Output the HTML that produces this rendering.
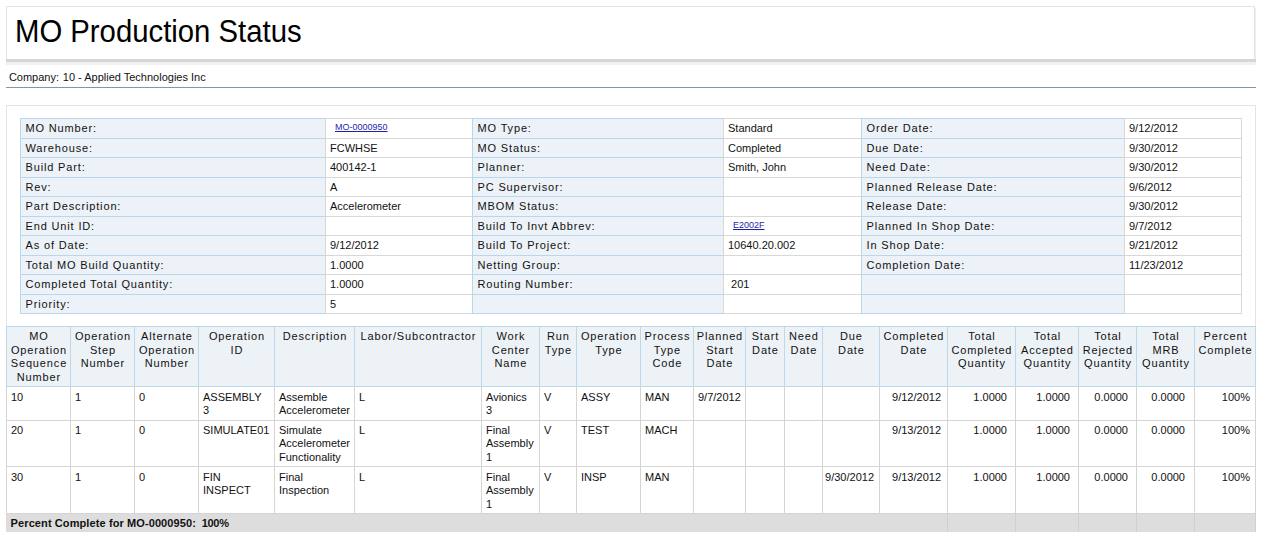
<!DOCTYPE html>
<html><head><meta charset="utf-8"><style>
html,body{margin:0;padding:0;background:#fff;}
body{position:relative;width:1266px;height:559px;overflow:hidden;font-family:"Liberation Sans",sans-serif;color:#000;}
.t{position:absolute;white-space:nowrap;line-height:13px;color:#111;}
.title{position:absolute;white-space:nowrap;font-size:31px;line-height:31px;color:#000;transform:scaleX(0.945);transform-origin:0 0;}
.h{position:absolute;text-align:center;font-size:11px;line-height:13.6px;color:#111;letter-spacing:0.85px;padding-left:0.85px;box-sizing:border-box;}
.l{letter-spacing:0.85px;}
.d{position:absolute;white-space:nowrap;font-size:11px;line-height:13.4px;color:#111;}
a{color:#1f1faa;text-decoration:underline;font-size:9px;}
</style></head><body>
<div style="position:absolute;left:6px;top:6px;width:1247px;height:53px;background:#fff;border:1px solid #e2e2e2;border-bottom:none;"></div>
<div style="position:absolute;left:1255px;top:8px;width:1px;height:51px;background:#eeeeee;"></div>
<div style="position:absolute;left:6px;top:59px;width:1250px;height:3px;background:#d6d6d6;"></div>
<div style="position:absolute;left:6px;top:62px;width:1250px;height:3px;background:#f1f1f1;"></div>
<div class="title" style="left:14.8px;top:16px;">MO Production Status</div>
<div class="t" style="left:8.9px;top:71px;font-size:11px;">Company:</div>
<div class="t" style="left:62.8px;top:71px;font-size:11px;">10 - Applied Technologies Inc</div>
<div style="position:absolute;left:6px;top:87px;width:1250px;height:1px;background:#7f98ab;"></div>
<div style="position:absolute;left:6px;top:105px;width:1248px;height:221px;border:1px solid #e4e4e4;border-bottom:none;background:#fff;"></div>
<div style="position:absolute;left:20px;top:118px;width:305px;height:195px;background:#ecf2f7;"></div>
<div style="position:absolute;left:472px;top:118px;width:251px;height:195px;background:#ecf2f7;"></div>
<div style="position:absolute;left:861px;top:118px;width:263px;height:195px;background:#ecf2f7;"></div>
<div style="position:absolute;left:20px;top:118px;width:306px;height:1px;background:#b8d7ea;"></div>
<div style="position:absolute;left:325px;top:118px;width:148px;height:1px;background:#d8d8d8;"></div>
<div style="position:absolute;left:472px;top:118px;width:252px;height:1px;background:#b8d7ea;"></div>
<div style="position:absolute;left:723px;top:118px;width:139px;height:1px;background:#d8d8d8;"></div>
<div style="position:absolute;left:861px;top:118px;width:264px;height:1px;background:#b8d7ea;"></div>
<div style="position:absolute;left:1124px;top:118px;width:118px;height:1px;background:#d8d8d8;"></div>
<div style="position:absolute;left:20px;top:138px;width:306px;height:1px;background:#b8d7ea;"></div>
<div style="position:absolute;left:325px;top:138px;width:148px;height:1px;background:#d8d8d8;"></div>
<div style="position:absolute;left:472px;top:138px;width:252px;height:1px;background:#b8d7ea;"></div>
<div style="position:absolute;left:723px;top:138px;width:139px;height:1px;background:#d8d8d8;"></div>
<div style="position:absolute;left:861px;top:138px;width:264px;height:1px;background:#b8d7ea;"></div>
<div style="position:absolute;left:1124px;top:138px;width:118px;height:1px;background:#d8d8d8;"></div>
<div style="position:absolute;left:20px;top:157px;width:306px;height:1px;background:#b8d7ea;"></div>
<div style="position:absolute;left:325px;top:157px;width:148px;height:1px;background:#d8d8d8;"></div>
<div style="position:absolute;left:472px;top:157px;width:252px;height:1px;background:#b8d7ea;"></div>
<div style="position:absolute;left:723px;top:157px;width:139px;height:1px;background:#d8d8d8;"></div>
<div style="position:absolute;left:861px;top:157px;width:264px;height:1px;background:#b8d7ea;"></div>
<div style="position:absolute;left:1124px;top:157px;width:118px;height:1px;background:#d8d8d8;"></div>
<div style="position:absolute;left:20px;top:177px;width:306px;height:1px;background:#b8d7ea;"></div>
<div style="position:absolute;left:325px;top:177px;width:148px;height:1px;background:#d8d8d8;"></div>
<div style="position:absolute;left:472px;top:177px;width:252px;height:1px;background:#b8d7ea;"></div>
<div style="position:absolute;left:723px;top:177px;width:139px;height:1px;background:#d8d8d8;"></div>
<div style="position:absolute;left:861px;top:177px;width:264px;height:1px;background:#b8d7ea;"></div>
<div style="position:absolute;left:1124px;top:177px;width:118px;height:1px;background:#d8d8d8;"></div>
<div style="position:absolute;left:20px;top:196px;width:306px;height:1px;background:#b8d7ea;"></div>
<div style="position:absolute;left:325px;top:196px;width:148px;height:1px;background:#d8d8d8;"></div>
<div style="position:absolute;left:472px;top:196px;width:252px;height:1px;background:#b8d7ea;"></div>
<div style="position:absolute;left:723px;top:196px;width:139px;height:1px;background:#d8d8d8;"></div>
<div style="position:absolute;left:861px;top:196px;width:264px;height:1px;background:#b8d7ea;"></div>
<div style="position:absolute;left:1124px;top:196px;width:118px;height:1px;background:#d8d8d8;"></div>
<div style="position:absolute;left:20px;top:216px;width:306px;height:1px;background:#b8d7ea;"></div>
<div style="position:absolute;left:325px;top:216px;width:148px;height:1px;background:#d8d8d8;"></div>
<div style="position:absolute;left:472px;top:216px;width:252px;height:1px;background:#b8d7ea;"></div>
<div style="position:absolute;left:723px;top:216px;width:139px;height:1px;background:#d8d8d8;"></div>
<div style="position:absolute;left:861px;top:216px;width:264px;height:1px;background:#b8d7ea;"></div>
<div style="position:absolute;left:1124px;top:216px;width:118px;height:1px;background:#d8d8d8;"></div>
<div style="position:absolute;left:20px;top:235px;width:306px;height:1px;background:#b8d7ea;"></div>
<div style="position:absolute;left:325px;top:235px;width:148px;height:1px;background:#d8d8d8;"></div>
<div style="position:absolute;left:472px;top:235px;width:252px;height:1px;background:#b8d7ea;"></div>
<div style="position:absolute;left:723px;top:235px;width:139px;height:1px;background:#d8d8d8;"></div>
<div style="position:absolute;left:861px;top:235px;width:264px;height:1px;background:#b8d7ea;"></div>
<div style="position:absolute;left:1124px;top:235px;width:118px;height:1px;background:#d8d8d8;"></div>
<div style="position:absolute;left:20px;top:255px;width:306px;height:1px;background:#b8d7ea;"></div>
<div style="position:absolute;left:325px;top:255px;width:148px;height:1px;background:#d8d8d8;"></div>
<div style="position:absolute;left:472px;top:255px;width:252px;height:1px;background:#b8d7ea;"></div>
<div style="position:absolute;left:723px;top:255px;width:139px;height:1px;background:#d8d8d8;"></div>
<div style="position:absolute;left:861px;top:255px;width:264px;height:1px;background:#b8d7ea;"></div>
<div style="position:absolute;left:1124px;top:255px;width:118px;height:1px;background:#d8d8d8;"></div>
<div style="position:absolute;left:20px;top:274px;width:306px;height:1px;background:#b8d7ea;"></div>
<div style="position:absolute;left:325px;top:274px;width:148px;height:1px;background:#d8d8d8;"></div>
<div style="position:absolute;left:472px;top:274px;width:252px;height:1px;background:#b8d7ea;"></div>
<div style="position:absolute;left:723px;top:274px;width:139px;height:1px;background:#d8d8d8;"></div>
<div style="position:absolute;left:861px;top:274px;width:264px;height:1px;background:#b8d7ea;"></div>
<div style="position:absolute;left:1124px;top:274px;width:118px;height:1px;background:#d8d8d8;"></div>
<div style="position:absolute;left:20px;top:294px;width:306px;height:1px;background:#b8d7ea;"></div>
<div style="position:absolute;left:325px;top:294px;width:148px;height:1px;background:#d8d8d8;"></div>
<div style="position:absolute;left:472px;top:294px;width:252px;height:1px;background:#b8d7ea;"></div>
<div style="position:absolute;left:723px;top:294px;width:139px;height:1px;background:#d8d8d8;"></div>
<div style="position:absolute;left:861px;top:294px;width:264px;height:1px;background:#b8d7ea;"></div>
<div style="position:absolute;left:1124px;top:294px;width:118px;height:1px;background:#d8d8d8;"></div>
<div style="position:absolute;left:20px;top:313px;width:306px;height:1px;background:#b8d7ea;"></div>
<div style="position:absolute;left:325px;top:313px;width:148px;height:1px;background:#d8d8d8;"></div>
<div style="position:absolute;left:472px;top:313px;width:252px;height:1px;background:#b8d7ea;"></div>
<div style="position:absolute;left:723px;top:313px;width:139px;height:1px;background:#d8d8d8;"></div>
<div style="position:absolute;left:861px;top:313px;width:264px;height:1px;background:#b8d7ea;"></div>
<div style="position:absolute;left:1124px;top:313px;width:118px;height:1px;background:#d8d8d8;"></div>
<div style="position:absolute;left:20px;top:118px;width:1px;height:196px;background:#b8d7ea;"></div>
<div style="position:absolute;left:325px;top:118px;width:1px;height:196px;background:#d8d8d8;"></div>
<div style="position:absolute;left:472px;top:118px;width:1px;height:196px;background:#b8d7ea;"></div>
<div style="position:absolute;left:723px;top:118px;width:1px;height:196px;background:#d8d8d8;"></div>
<div style="position:absolute;left:861px;top:118px;width:1px;height:196px;background:#b8d7ea;"></div>
<div style="position:absolute;left:1124px;top:118px;width:1px;height:196px;background:#d8d8d8;"></div>
<div style="position:absolute;left:1241px;top:118px;width:1px;height:196px;background:#d8d8d8;"></div>
<div class="t" style="left:25.5px;top:122px;font-size:11px;letter-spacing:0.85px;">MO Number:</div>
<div class="t" style="left:335px;top:118px;"><a>MO-0000950</a></div>
<div class="t" style="left:477.5px;top:122px;font-size:11px;letter-spacing:0.85px;">MO Type:</div>
<div class="t" style="left:728px;top:122px;font-size:11px;">Standard</div>
<div class="t" style="left:866.5px;top:122px;font-size:11px;letter-spacing:0.85px;">Order Date:</div>
<div class="t" style="left:1129px;top:122px;font-size:11px;">9/12/2012</div>
<div class="t" style="left:25.5px;top:142px;font-size:11px;letter-spacing:0.85px;">Warehouse:</div>
<div class="t" style="left:330px;top:142px;font-size:11px;">FCWHSE</div>
<div class="t" style="left:477.5px;top:142px;font-size:11px;letter-spacing:0.85px;">MO Status:</div>
<div class="t" style="left:728px;top:142px;font-size:11px;">Completed</div>
<div class="t" style="left:866.5px;top:142px;font-size:11px;letter-spacing:0.85px;">Due Date:</div>
<div class="t" style="left:1129px;top:142px;font-size:11px;">9/30/2012</div>
<div class="t" style="left:25.5px;top:161px;font-size:11px;letter-spacing:0.85px;">Build Part:</div>
<div class="t" style="left:330px;top:161px;font-size:11px;">400142-1</div>
<div class="t" style="left:477.5px;top:161px;font-size:11px;letter-spacing:0.85px;">Planner:</div>
<div class="t" style="left:728px;top:161px;font-size:11px;">Smith, John</div>
<div class="t" style="left:866.5px;top:161px;font-size:11px;letter-spacing:0.85px;">Need Date:</div>
<div class="t" style="left:1129px;top:161px;font-size:11px;">9/30/2012</div>
<div class="t" style="left:25.5px;top:181px;font-size:11px;letter-spacing:0.85px;">Rev:</div>
<div class="t" style="left:330px;top:181px;font-size:11px;">A</div>
<div class="t" style="left:477.5px;top:181px;font-size:11px;letter-spacing:0.85px;">PC Supervisor:</div>
<div class="t" style="left:866.5px;top:181px;font-size:11px;letter-spacing:0.85px;">Planned Release Date:</div>
<div class="t" style="left:1129px;top:181px;font-size:11px;">9/6/2012</div>
<div class="t" style="left:25.5px;top:200px;font-size:11px;letter-spacing:0.85px;">Part Description:</div>
<div class="t" style="left:330px;top:200px;font-size:11px;">Accelerometer</div>
<div class="t" style="left:477.5px;top:200px;font-size:11px;letter-spacing:0.85px;">MBOM Status:</div>
<div class="t" style="left:866.5px;top:200px;font-size:11px;letter-spacing:0.85px;">Release Date:</div>
<div class="t" style="left:1129px;top:200px;font-size:11px;">9/30/2012</div>
<div class="t" style="left:25.5px;top:220px;font-size:11px;letter-spacing:0.85px;">End Unit ID:</div>
<div class="t" style="left:477.5px;top:220px;font-size:11px;letter-spacing:0.85px;">Build To Invt Abbrev:</div>
<div class="t" style="left:733px;top:216px;"><a>E2002F</a></div>
<div class="t" style="left:866.5px;top:220px;font-size:11px;letter-spacing:0.85px;">Planned In Shop Date:</div>
<div class="t" style="left:1129px;top:220px;font-size:11px;">9/7/2012</div>
<div class="t" style="left:25.5px;top:239px;font-size:11px;letter-spacing:0.85px;">As of Date:</div>
<div class="t" style="left:330px;top:239px;font-size:11px;">9/12/2012</div>
<div class="t" style="left:477.5px;top:239px;font-size:11px;letter-spacing:0.85px;">Build To Project:</div>
<div class="t" style="left:728px;top:239px;font-size:11px;">10640.20.002</div>
<div class="t" style="left:866.5px;top:239px;font-size:11px;letter-spacing:0.85px;">In Shop Date:</div>
<div class="t" style="left:1129px;top:239px;font-size:11px;">9/21/2012</div>
<div class="t" style="left:25.5px;top:259px;font-size:11px;letter-spacing:0.85px;">Total MO Build Quantity:</div>
<div class="t" style="left:330px;top:259px;font-size:11px;">1.0000</div>
<div class="t" style="left:477.5px;top:259px;font-size:11px;letter-spacing:0.85px;">Netting Group:</div>
<div class="t" style="left:866.5px;top:259px;font-size:11px;letter-spacing:0.85px;">Completion Date:</div>
<div class="t" style="left:1129px;top:259px;font-size:11px;">11/23/2012</div>
<div class="t" style="left:25.5px;top:278px;font-size:11px;letter-spacing:0.85px;">Completed Total Quantity:</div>
<div class="t" style="left:330px;top:278px;font-size:11px;">1.0000</div>
<div class="t" style="left:477.5px;top:278px;font-size:11px;letter-spacing:0.85px;">Routing Number:</div>
<div class="t" style="left:728px;top:278px;font-size:11px;">&nbsp;201</div>
<div class="t" style="left:25.5px;top:298px;font-size:11px;letter-spacing:0.85px;">Priority:</div>
<div class="t" style="left:330px;top:298px;font-size:11px;">5</div>
<div style="position:absolute;left:6px;top:326px;width:1249px;height:60px;background:#edf2f6;"></div>
<div style="position:absolute;left:6px;top:326px;width:1250px;height:1px;background:#bcd8eb;"></div>
<div style="position:absolute;left:6px;top:386px;width:1250px;height:1px;background:#bcd8eb;"></div>
<div style="position:absolute;left:6px;top:326px;width:1px;height:60px;background:#bcd8eb;"></div>
<div style="position:absolute;left:6px;top:386px;width:1px;height:127px;background:#d5d5d5;"></div>
<div style="position:absolute;left:70px;top:326px;width:1px;height:60px;background:#bcd8eb;"></div>
<div style="position:absolute;left:70px;top:386px;width:1px;height:127px;background:#d5d5d5;"></div>
<div style="position:absolute;left:134px;top:326px;width:1px;height:60px;background:#bcd8eb;"></div>
<div style="position:absolute;left:134px;top:386px;width:1px;height:127px;background:#d5d5d5;"></div>
<div style="position:absolute;left:198px;top:326px;width:1px;height:60px;background:#bcd8eb;"></div>
<div style="position:absolute;left:198px;top:386px;width:1px;height:127px;background:#d5d5d5;"></div>
<div style="position:absolute;left:274px;top:326px;width:1px;height:60px;background:#bcd8eb;"></div>
<div style="position:absolute;left:274px;top:386px;width:1px;height:127px;background:#d5d5d5;"></div>
<div style="position:absolute;left:354px;top:326px;width:1px;height:60px;background:#bcd8eb;"></div>
<div style="position:absolute;left:354px;top:386px;width:1px;height:127px;background:#d5d5d5;"></div>
<div style="position:absolute;left:481px;top:326px;width:1px;height:60px;background:#bcd8eb;"></div>
<div style="position:absolute;left:481px;top:386px;width:1px;height:127px;background:#d5d5d5;"></div>
<div style="position:absolute;left:539px;top:326px;width:1px;height:60px;background:#bcd8eb;"></div>
<div style="position:absolute;left:539px;top:386px;width:1px;height:127px;background:#d5d5d5;"></div>
<div style="position:absolute;left:576px;top:326px;width:1px;height:60px;background:#bcd8eb;"></div>
<div style="position:absolute;left:576px;top:386px;width:1px;height:127px;background:#d5d5d5;"></div>
<div style="position:absolute;left:640px;top:326px;width:1px;height:60px;background:#bcd8eb;"></div>
<div style="position:absolute;left:640px;top:386px;width:1px;height:127px;background:#d5d5d5;"></div>
<div style="position:absolute;left:693px;top:326px;width:1px;height:60px;background:#bcd8eb;"></div>
<div style="position:absolute;left:693px;top:386px;width:1px;height:127px;background:#d5d5d5;"></div>
<div style="position:absolute;left:745px;top:326px;width:1px;height:60px;background:#bcd8eb;"></div>
<div style="position:absolute;left:745px;top:386px;width:1px;height:127px;background:#d5d5d5;"></div>
<div style="position:absolute;left:784px;top:326px;width:1px;height:60px;background:#bcd8eb;"></div>
<div style="position:absolute;left:784px;top:386px;width:1px;height:127px;background:#d5d5d5;"></div>
<div style="position:absolute;left:822px;top:326px;width:1px;height:60px;background:#bcd8eb;"></div>
<div style="position:absolute;left:822px;top:386px;width:1px;height:127px;background:#d5d5d5;"></div>
<div style="position:absolute;left:879px;top:326px;width:1px;height:60px;background:#bcd8eb;"></div>
<div style="position:absolute;left:879px;top:386px;width:1px;height:127px;background:#d5d5d5;"></div>
<div style="position:absolute;left:947px;top:326px;width:1px;height:60px;background:#bcd8eb;"></div>
<div style="position:absolute;left:947px;top:386px;width:1px;height:127px;background:#d5d5d5;"></div>
<div style="position:absolute;left:1015px;top:326px;width:1px;height:60px;background:#bcd8eb;"></div>
<div style="position:absolute;left:1015px;top:386px;width:1px;height:127px;background:#d5d5d5;"></div>
<div style="position:absolute;left:1078px;top:326px;width:1px;height:60px;background:#bcd8eb;"></div>
<div style="position:absolute;left:1078px;top:386px;width:1px;height:127px;background:#d5d5d5;"></div>
<div style="position:absolute;left:1136px;top:326px;width:1px;height:60px;background:#bcd8eb;"></div>
<div style="position:absolute;left:1136px;top:386px;width:1px;height:127px;background:#d5d5d5;"></div>
<div style="position:absolute;left:1194px;top:326px;width:1px;height:60px;background:#bcd8eb;"></div>
<div style="position:absolute;left:1194px;top:386px;width:1px;height:127px;background:#d5d5d5;"></div>
<div style="position:absolute;left:1255px;top:326px;width:1px;height:60px;background:#bcd8eb;"></div>
<div style="position:absolute;left:1255px;top:386px;width:1px;height:127px;background:#d5d5d5;"></div>
<div style="position:absolute;left:6px;top:420px;width:1250px;height:1px;background:#d5d5d5;"></div>
<div style="position:absolute;left:6px;top:466px;width:1250px;height:1px;background:#d5d5d5;"></div>
<div style="position:absolute;left:6px;top:513px;width:1250px;height:1px;background:#d5d5d5;"></div>
<div style="position:absolute;left:6px;top:514px;width:1250px;height:18px;background:#dddddd;"></div>
<div style="position:absolute;left:947px;top:513px;width:1px;height:19px;background:#d0d0d0;"></div>
<div style="position:absolute;left:1015px;top:513px;width:1px;height:19px;background:#d0d0d0;"></div>
<div style="position:absolute;left:1078px;top:513px;width:1px;height:19px;background:#d0d0d0;"></div>
<div style="position:absolute;left:1136px;top:513px;width:1px;height:19px;background:#d0d0d0;"></div>
<div style="position:absolute;left:1194px;top:513px;width:1px;height:19px;background:#d0d0d0;"></div>
<div style="position:absolute;left:1255px;top:513px;width:1px;height:19px;background:#d0d0d0;"></div>
<div class="h" style="left:7px;top:330px;width:63px;">MO<br>Operation<br>Sequence<br>Number</div>
<div class="h" style="left:71px;top:330px;width:63px;">Operation<br>Step<br>Number</div>
<div class="h" style="left:135px;top:330px;width:63px;">Alternate<br>Operation<br>Number</div>
<div class="h" style="left:199px;top:330px;width:75px;">Operation<br>ID</div>
<div class="h" style="left:275px;top:330px;width:79px;">Description</div>
<div class="h" style="left:355px;top:330px;width:126px;">Labor/Subcontractor</div>
<div class="h" style="left:482px;top:330px;width:57px;">Work<br>Center<br>Name</div>
<div class="h" style="left:540px;top:330px;width:36px;">Run<br>Type</div>
<div class="h" style="left:577px;top:330px;width:63px;">Operation<br>Type</div>
<div class="h" style="left:641px;top:330px;width:52px;">Process<br>Type<br>Code</div>
<div class="h" style="left:694px;top:330px;width:51px;">Planned<br>Start<br>Date</div>
<div class="h" style="left:746px;top:330px;width:38px;">Start<br>Date</div>
<div class="h" style="left:785px;top:330px;width:37px;">Need<br>Date</div>
<div class="h" style="left:823px;top:330px;width:56px;">Due<br>Date</div>
<div class="h" style="left:880px;top:330px;width:67px;">Completed<br>Date</div>
<div class="h" style="left:948px;top:330px;width:67px;">Total<br>Completed<br>Quantity</div>
<div class="h" style="left:1016px;top:330px;width:62px;">Total<br>Accepted<br>Quantity</div>
<div class="h" style="left:1079px;top:330px;width:57px;">Total<br>Rejected<br>Quantity</div>
<div class="h" style="left:1137px;top:330px;width:57px;">Total<br>MRB<br>Quantity</div>
<div class="h" style="left:1195px;top:330px;width:60px;">Percent<br>Complete</div>
<div class="d" style="left:11px;top:391px;">10</div>
<div class="d" style="left:75px;top:391px;">1</div>
<div class="d" style="left:139px;top:391px;">0</div>
<div class="d" style="left:203px;top:391px;">ASSEMBLY<br>3</div>
<div class="d" style="left:279px;top:391px;">Assemble<br>Accelerometer</div>
<div class="d" style="left:359px;top:391px;">L</div>
<div class="d" style="left:486px;top:391px;">Avionics<br>3</div>
<div class="d" style="left:544px;top:391px;">V</div>
<div class="d" style="left:581px;top:391px;">ASSY</div>
<div class="d" style="left:645px;top:391px;">MAN</div>
<div class="d" style="left:698px;top:391px;">9/7/2012</div>
<div class="d" style="left:880px;top:391px;width:61px;text-align:right;">9/12/2012</div>
<div class="d" style="left:948px;top:391px;width:59px;text-align:right;">1.0000</div>
<div class="d" style="left:1016px;top:391px;width:54px;text-align:right;">1.0000</div>
<div class="d" style="left:1079px;top:391px;width:49px;text-align:right;">0.0000</div>
<div class="d" style="left:1137px;top:391px;width:48px;text-align:right;">0.0000</div>
<div class="d" style="left:1195px;top:391px;width:55px;text-align:right;">100%</div>
<div class="d" style="left:11px;top:424px;">20</div>
<div class="d" style="left:75px;top:424px;">1</div>
<div class="d" style="left:139px;top:424px;">0</div>
<div class="d" style="left:203px;top:424px;">SIMULATE01</div>
<div class="d" style="left:279px;top:424px;">Simulate<br>Accelerometer<br>Functionality</div>
<div class="d" style="left:359px;top:424px;">L</div>
<div class="d" style="left:486px;top:424px;">Final<br>Assembly<br>1</div>
<div class="d" style="left:544px;top:424px;">V</div>
<div class="d" style="left:581px;top:424px;">TEST</div>
<div class="d" style="left:645px;top:424px;">MACH</div>
<div class="d" style="left:880px;top:424px;width:61px;text-align:right;">9/13/2012</div>
<div class="d" style="left:948px;top:424px;width:59px;text-align:right;">1.0000</div>
<div class="d" style="left:1016px;top:424px;width:54px;text-align:right;">1.0000</div>
<div class="d" style="left:1079px;top:424px;width:49px;text-align:right;">0.0000</div>
<div class="d" style="left:1137px;top:424px;width:48px;text-align:right;">0.0000</div>
<div class="d" style="left:1195px;top:424px;width:55px;text-align:right;">100%</div>
<div class="d" style="left:11px;top:471px;">30</div>
<div class="d" style="left:75px;top:471px;">1</div>
<div class="d" style="left:139px;top:471px;">0</div>
<div class="d" style="left:203px;top:471px;">FIN<br>INSPECT</div>
<div class="d" style="left:279px;top:471px;">Final<br>Inspection</div>
<div class="d" style="left:359px;top:471px;">L</div>
<div class="d" style="left:486px;top:471px;">Final<br>Assembly<br>1</div>
<div class="d" style="left:544px;top:471px;">V</div>
<div class="d" style="left:581px;top:471px;">INSP</div>
<div class="d" style="left:645px;top:471px;">MAN</div>
<div class="d" style="left:823px;top:471px;width:51px;text-align:right;">9/30/2012</div>
<div class="d" style="left:880px;top:471px;width:61px;text-align:right;">9/13/2012</div>
<div class="d" style="left:948px;top:471px;width:59px;text-align:right;">1.0000</div>
<div class="d" style="left:1016px;top:471px;width:54px;text-align:right;">1.0000</div>
<div class="d" style="left:1079px;top:471px;width:49px;text-align:right;">0.0000</div>
<div class="d" style="left:1137px;top:471px;width:48px;text-align:right;">0.0000</div>
<div class="d" style="left:1195px;top:471px;width:55px;text-align:right;">100%</div>
<div class="t" style="left:10.6px;top:517px;font-size:11px;font-weight:bold;letter-spacing:0.1px;">Percent Complete for MO-0000950:</div>
<div class="t" style="left:201.7px;top:517px;font-size:11px;font-weight:bold;letter-spacing:-0.3px;">100%</div>
</body></html>
